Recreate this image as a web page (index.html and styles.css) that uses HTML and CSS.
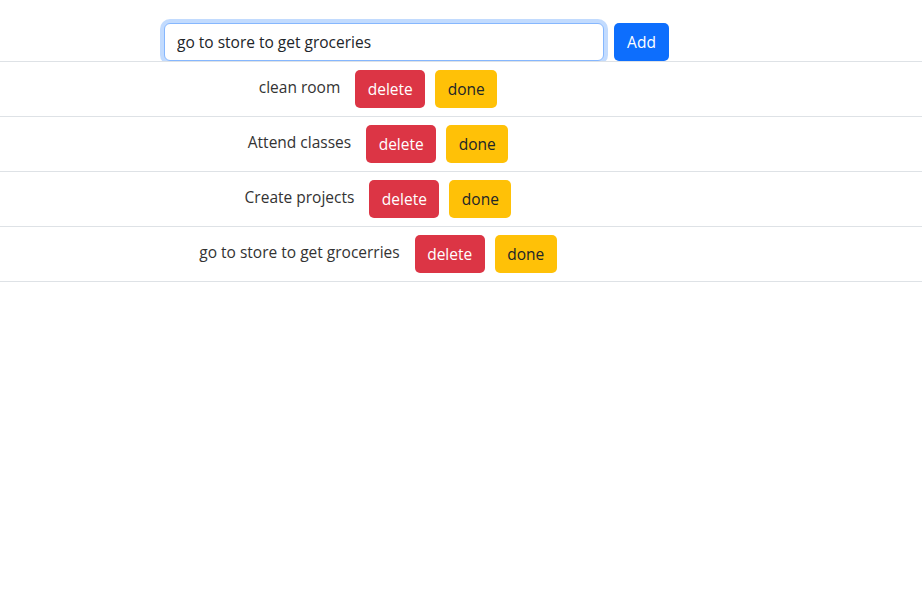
FILE: index.html
```html
<!DOCTYPE html>
<html>
<head>
<meta charset="utf-8">
<link rel="stylesheet" href="styles.css">
</head>
<body>
<div class="add-row">
  <input class="task-input" type="text" value="go to store to get groceries">
  <button class="btn btn-add">Add</button>
</div>
<ul class="task-list">
  <li class="task"><span class="task-text">clean room</span><button class="btn btn-delete">delete</button><button class="btn btn-done">done</button></li>
  <li class="task"><span class="task-text">Attend classes</span><button class="btn btn-delete">delete</button><button class="btn btn-done">done</button></li>
  <li class="task"><span class="task-text">Create projects</span><button class="btn btn-delete">delete</button><button class="btn btn-done">done</button></li>
  <li class="task"><span class="task-text">go to store to get grocerries</span><button class="btn btn-delete">delete</button><button class="btn btn-done">done</button></li>
</ul>
</body>
</html>
```
FILE: styles.css
```css
* { box-sizing: border-box; }
body {
  margin: 0;
  background: #fff;
  font-family: "Open Sans", "Noto Sans", sans-serif;
  font-size: 15.5px;
  color: #212529;
}
.add-row {
  display: flex;
  gap: 10px;
  padding: 23px 0 0 164px;
}
.task-input {
  width: 440px;
  height: 38px;
  padding: 6px 12px;
  font-family: inherit;
  font-size: 15.5px;
  color: #212529;
  border: 1px solid #86b7fe;
  border-radius: 6px;
  box-shadow: 0 0 0 4px rgba(13, 110, 253, 0.25);
  outline: none;
}
.btn {
  height: 38px;
  padding: 6px 0;
  font-family: inherit;
  font-size: 15.5px;
  line-height: 24px;
  text-align: center;
  border: 1px solid transparent;
  border-radius: 5px;
  cursor: pointer;
}
.btn-add { width: 55px; background: #0d6efd; color: #fff; }
.btn-delete { width: 70px; background: #dc3545; color: #fff; margin-left: 15px; }
.btn-done { width: 62px; background: #ffc107; color: #212529; margin-left: 10px; }
.task-list {
  list-style: none;
  margin: 0;
  padding: 0;
}
.task {
  position: relative;
  background: #fff;
  display: flex;
  justify-content: center;
  align-items: center;
  padding: 8px 166px 8px 0;
  border-top: 1px solid #dee2e6;
}
.task:last-child { border-bottom: 1px solid #dee2e6; }
.task-text {
  color: #333;
  margin-bottom: 4px;
}
```
